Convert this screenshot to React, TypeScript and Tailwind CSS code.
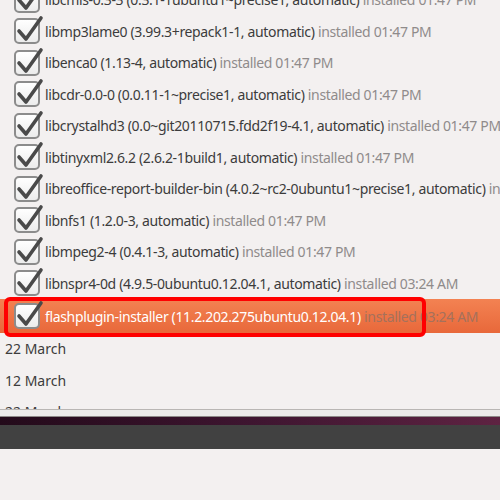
import React from 'react'

type Pkg = { name: string; ver: string; time: string }

const PKGS: Pkg[] = [
  { name: 'libcmis-0.3-3', ver: '(0.3.1-1ubuntu1~precise1, automatic)', time: 'installed 01:47 PM' },
  { name: 'libmp3lame0', ver: '(3.99.3+repack1-1, automatic)', time: 'installed 01:47 PM' },
  { name: 'libenca0', ver: '(1.13-4, automatic)', time: 'installed 01:47 PM' },
  { name: 'libcdr-0.0-0', ver: '(0.0.11-1~precise1, automatic)', time: 'installed 01:47 PM' },
  { name: 'libcrystalhd3', ver: '(0.0~git20110715.fdd2f19-4.1, automatic)', time: 'installed 01:47 PM' },
  { name: 'libtinyxml2.6.2', ver: '(2.6.2-1build1, automatic)', time: 'installed 01:47 PM' },
  { name: 'libreoffice-report-builder-bin', ver: '(4.0.2~rc2-0ubuntu1~precise1, automatic)', time: 'installed 01:47 PM' },
  { name: 'libnfs1', ver: '(1.2.0-3, automatic)', time: 'installed 01:47 PM' },
  { name: 'libmpeg2-4', ver: '(0.4.1-3, automatic)', time: 'installed 01:47 PM' },
  { name: 'libnspr4-0d', ver: '(4.9.5-0ubuntu0.12.04.1, automatic)', time: 'installed 03:24 AM' },
]

function Check() {
  return (
    <div className="relative w-[26px] h-[26px] shrink-0">
      <div className="absolute inset-0 rounded-[5px] border-2 border-[#8c8c8c] bg-gradient-to-b from-[#ffffff] to-[#ececec]" />
      <svg className="absolute -top-[4px] left-0" width="30" height="30" viewBox="0 0 30 30">
        <path d="M5 17 L12 25 L27 4" fill="none" stroke="#4a4a4a" strokeWidth="3.6" strokeLinecap="round" strokeLinejoin="round" />
      </svg>
    </div>
  )
}

export default function App() {
  const font = { fontFamily: '"Noto Sans", "Open Sans", sans-serif' }
  return (
    <div className="w-[500px] h-[500px] bg-[#f3f0f0] overflow-hidden flex flex-col" style={font}>
      <div className="relative h-[409px] overflow-hidden shrink-0">
        <div className="flex flex-col -mt-[16px]">
          {PKGS.map(p => (
            <div key={p.name} className="h-[31.5px] flex items-center gap-[5px] pl-[14px] whitespace-nowrap text-[14px] tracking-[-0.35px] text-[#3c3c3c]">
              <Check />
              <span>
                {p.name} {p.ver} <span className="text-[#8f8b8b]">{p.time}</span>
              </span>
            </div>
          ))}
          <div className="relative h-[34px] flex items-center gap-[5px] pl-[14px] whitespace-nowrap text-[14px] tracking-[-0.35px] text-white bg-gradient-to-b from-[#f38252] to-[#e8683a]">
            <Check />
            <span>
              flashplugin-installer (11.2.202.275ubuntu0.12.04.1) <span className="text-[#a5715c]">installed 03:24 AM</span>
            </span>
            <div className="absolute left-[4px] top-[-2px] w-[422px] h-[40px] rounded-[6px] border-4 border-[#ff0000]" />
          </div>
          {['22 March', '12 March', '22 March'].map((d, i) => (
            <div key={i} className="h-[31.5px] flex items-center pl-[5px] text-[14px] text-[#3c3c3c]">
              {d}
            </div>
          ))}
        </div>
      </div>
      <div className="h-px bg-[#b9b6b4] shrink-0" />
      <div className="h-[6px] bg-[#ecebea] shrink-0" />
      <div className="h-px bg-[#8d8a88] shrink-0" />
      <div className="h-[8px] bg-gradient-to-r from-[#230a1a] via-[#3e1530] to-[#5e2342] shrink-0" />
      <div className="h-[24px] bg-[#414141] shrink-0" />
      <div className="flex-1 bg-[#f3f0f0]" />
    </div>
  )
}
